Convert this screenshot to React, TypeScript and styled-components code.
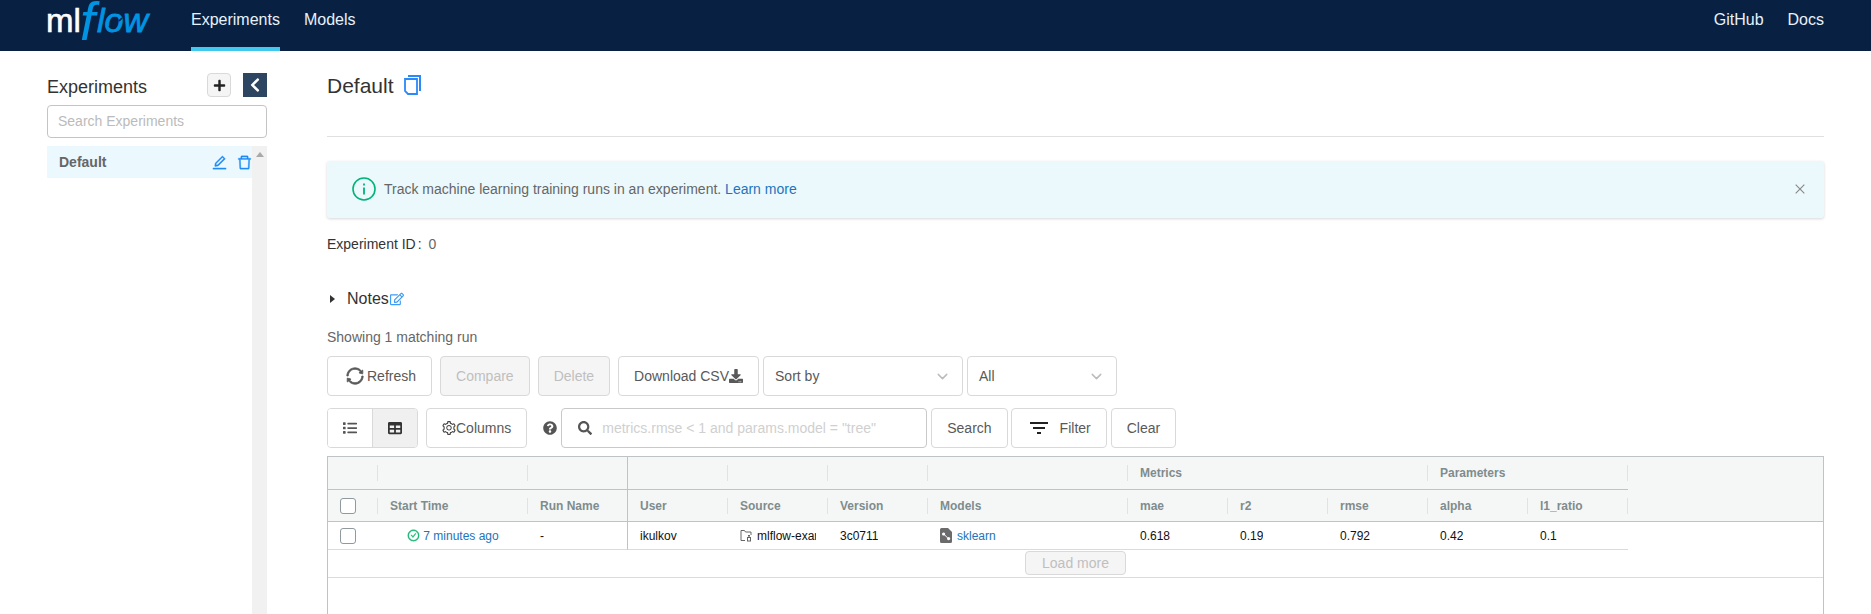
import styled, { createGlobalStyle } from 'styled-components';
import {
  AiOutlineCheckCircle,
  AiOutlineClose,
  AiOutlineDelete,
  AiOutlineEdit,
  AiOutlineSetting,
  AiOutlineSync,
} from 'react-icons/ai';
import {
  FaChevronLeft,
  FaDownload,
  FaList,
  FaPlus,
  FaQuestionCircle,
  FaRegEdit,
  FaSearch,
  FaTable,
} from 'react-icons/fa';
import { FiChevronDown } from 'react-icons/fi';

const GlobalStyle = createGlobalStyle`
  html, body {
    margin: 0;
    height: 100%;
    overflow: hidden;
    background: #fff;
    font-family: 'Liberation Sans', Arial, sans-serif;
    font-size: 14px;
    color: #666;
  }
  * { box-sizing: border-box; }
`;

const Page = styled.div`
  height: 614px;
  display: flex;
  flex-direction: column;
  overflow: hidden;
`;

/* ---------- top bar ---------- */
const TopBar = styled.header`
  height: 51px;
  flex: none;
  display: flex;
  align-items: stretch;
  padding: 0 47px;
  background: #082142;
`;

const LogoMark = styled.svg`
  width: 144px;
  height: 51px;
  flex: none;
  font-family: 'Liberation Sans', Arial, sans-serif;
`;

const NavItem = styled.a<{ $active?: boolean }>`
  display: flex;
  align-items: center;
  height: 51px;
  padding-bottom: 7px;
  font-size: 16px;
  color: #e7f1fb;
  border-bottom: 4px solid ${(p) => (p.$active ? '#43c9ed' : 'transparent')};
  & + & {
    margin-left: 24px;
  }
`;

const NavSpacer = styled.div`
  flex: 1;
`;

/* ---------- sidebar ---------- */
const Body = styled.div`
  flex: 1;
  min-height: 0;
  display: flex;
  padding: 0 47px;
  gap: 60px;
`;

const Sidebar = styled.aside`
  width: 220px;
  flex: none;
  padding-top: 22px;
  display: flex;
  flex-direction: column;
`;

const SidebarHead = styled.div`
  display: flex;
  align-items: center;
  height: 24px;
`;

const SidebarTitle = styled.h1`
  flex: 1;
  margin: 4px 0 0;
  font-size: 18px;
  font-weight: 400;
  color: #333;
`;

const AddButton = styled.button`
  width: 24px;
  height: 24px;
  padding: 0;
  display: flex;
  align-items: center;
  justify-content: center;
  background: #f5f5f5;
  border: 1px solid #d9d9d9;
  border-radius: 4px;
  color: #222;
  font-size: 13px;
`;

const CollapseButton = styled.button`
  width: 24px;
  height: 24px;
  margin-left: 12px;
  padding: 0;
  display: flex;
  align-items: center;
  justify-content: center;
  background: #2e4562;
  border: none;
  color: #fff;
  font-size: 16px;
`;

const SidebarSearch = styled.input`
  width: 220px;
  height: 33px;
  margin-top: 8px;
  padding: 0 10px 2px;
  font: inherit;
  border: 1px solid #c4c4c4;
  border-radius: 4px;
  outline: none;
  &::placeholder {
    color: #bbb;
  }
`;

const ExperimentList = styled.div`
  flex: 1;
  display: flex;
  margin-top: 8px;
`;

const ExperimentItem = styled.div`
  flex: 1;
  height: 32px;
  display: flex;
  align-items: center;
  padding: 0 0 0 12px;
  background: #ebf8fd;
  font-weight: 700;
  color: #666;
`;

const ItemName = styled.span`
  flex: 1;
`;

const ItemIcon = styled.span<{ $gap?: number }>`
  display: flex;
  margin-right: ${(p) => p.$gap ?? 0}px;
  color: #1f8cf5;
  font-size: 17px;

  svg {
    stroke: currentColor;
    stroke-width: 20;
  }
`;

const ScrollTrack = styled.div`
  width: 15px;
  flex: none;
  background: #f1f1f1;
  display: flex;
  justify-content: center;
  padding-top: 6px;
`;

const ScrollArrow = styled.div`
  width: 0;
  height: 0;
  border-left: 4px solid transparent;
  border-right: 4px solid transparent;
  border-bottom: 5px solid #a8a8a8;
`;

/* ---------- main ---------- */
const Main = styled.main`
  flex: 1;
  min-width: 0;
  display: flex;
  flex-direction: column;
`;

const TitleRow = styled.div`
  height: 86px;
  padding-top: 22px;
  display: flex;
  align-items: flex-start;
  gap: 10px;
  border-bottom: 1px solid #e0e0e0;
`;

const Title = styled.h2`
  margin: 0;
  font-size: 21px;
  line-height: 25px;
  font-weight: 400;
  color: #333;
`;

const Alert = styled.div`
  height: 57px;
  margin-top: 24px;
  padding: 0 14px 2px 25px;
  display: flex;
  align-items: center;
  background: #ebf9fd;
  border-radius: 3px;
  box-shadow: 0 1px 3px rgba(0, 0, 0, 0.16);
`;

const AlertText = styled.span`
  flex: 1;
  margin: 1px 0 0 8px;
  color: #666;
`;

const Link = styled.a`
  color: #2374bb;
`;

const CloseIcon = styled(AiOutlineClose)`
  font-size: 14px;
  color: #888;
  margin-right: 3px;
`;

const ExperimentId = styled.div`
  margin-top: 18px;
  height: 16px;
  line-height: 16px;
  color: #333;
`;

const IdColon = styled.span`
  margin-left: 2px;
`;

const IdValue = styled.span`
  margin-left: 7px;
  color: #666;
`;

const Notes = styled.div`
  margin-top: 38px;
  height: 18px;
  display: flex;
  align-items: center;
  font-size: 16px;
  color: #333;
`;

const Caret = styled.span`
  width: 0;
  height: 0;
  margin: 0 12px 0 3px;
  border-top: 4px solid transparent;
  border-bottom: 4px solid transparent;
  border-left: 5px solid #333;
`;

const NotesEdit = styled(FaRegEdit)`
  margin-left: 1px;
  font-size: 14px;
  color: #3f9bf5;
`;

const Showing = styled.div`
  margin-top: 21px;
  height: 16px;
  line-height: 16px;
`;

const ToolRow = styled.div<{ $top: number }>`
  display: flex;
  align-items: center;
  height: 40px;
  margin-top: ${(p) => p.$top}px;
`;

const Button = styled.button<{ $disabled?: boolean; $after?: number; $gap?: number; $left?: number }>`
  height: 40px;
  padding: 0 15px 0 ${(p) => p.$left ?? 15}px;
  display: flex;
  align-items: center;
  gap: ${(p) => p.$gap ?? 0}px;
  flex: none;
  font: inherit;
  white-space: nowrap;
  color: ${(p) => (p.$disabled ? '#bfbfbf' : '#595959')};
  background: ${(p) => (p.$disabled ? '#f5f5f5' : '#fff')};
  border: 1px solid #d9d9d9;
  border-radius: 4px;
  margin-right: ${(p) => p.$after ?? 8}px;
`;

const RefreshIcon = styled(AiOutlineSync)`
  font-size: 20px;
  stroke: currentColor;
  stroke-width: 40;
`;

const GearIcon = styled(AiOutlineSetting)`
  font-size: 16px;
  margin: 0 -1px;
  color: #444;
`;

const SelectBox = styled.div<{ $w: number }>`
  width: ${(p) => p.$w}px;
  height: 40px;
  margin-right: 4px;
  padding: 0 11px;
  display: flex;
  align-items: center;
  justify-content: space-between;
  background: #fff;
  border: 1px solid #d9d9d9;
  border-radius: 4px;
  color: #595959;
`;

const SelectArrow = styled(FiChevronDown)`
  font-size: 17px;
  color: #bbb;
`;

const Toggle = styled.div`
  width: 91px;
  height: 40px;
  flex: none;
  margin-right: 8px;
  display: flex;
  border: 1px solid #d9d9d9;
  border-radius: 4px;
  overflow: hidden;
`;

const ToggleItem = styled.div<{ $on?: boolean }>`
  flex: 1;
  display: flex;
  align-items: center;
  justify-content: center;
  font-size: 14px;
  color: ${(p) => (p.$on ? '#333' : '#555')};
  background: ${(p) => (p.$on ? '#f0f0f0' : '#fff')};
  & + & {
    border-left: 1px solid #d9d9d9;
  }
`;

const HelpIcon = styled(FaQuestionCircle)`
  margin: 0 4px 0 8px;
  font-size: 14px;
  flex: none;
  color: #555;
`;

const QueryBox = styled.div`
  width: 366px;
  height: 40px;
  flex: none;
  margin-right: 4px;
  padding-left: 16px;
  display: flex;
  align-items: center;
  border: 1px solid #c9c9c9;
  border-radius: 4px;
  color: #555;
  font-size: 14px;
`;

const QueryInput = styled.input`
  flex: 1;
  min-width: 0;
  margin-left: 8px;
  border: none;
  outline: none;
  font: inherit;
  &::placeholder {
    color: #d0d0d0;
  }
`;

/* ---------- runs grid ---------- */
const Grid = styled.section`
  flex: 1;
  margin-top: 8px;
  min-height: 0;
  display: flex;
  flex-direction: column;
  border: 1px solid #bdc3c7;
  border-bottom: none;
  font-size: 12px;
`;

const HeadRow = styled.div<{ $line?: boolean; $h: number }>`
  display: flex;
  flex: none;
  height: ${(p) => p.$h}px;
  background: #f5f7f7;
  border-bottom: ${(p) => (p.$line ? '1px solid #bdc3c7' : 'none')};
`;

const DataRow = styled.div`
  display: flex;
  flex: none;
  height: 28px;
`;

const Cell = styled.div<{ $w: number; $pin?: boolean; $sep?: boolean; $line?: string; $center?: boolean }>`
  position: relative;
  flex: none;
  width: ${(p) => p.$w}px;
  padding: 0 12px;
  display: flex;
  align-items: center;
  justify-content: ${(p) => (p.$center ? 'center' : 'flex-start')};
  white-space: nowrap;
  overflow: hidden;
  border-right: ${(p) => (p.$pin ? '1px solid #bdc3c7' : 'none')};
  border-bottom: ${(p) => (p.$line ? `1px solid ${p.$line}` : 'none')};

  &::after {
    content: '';
    display: ${(p) => (p.$sep ? 'block' : 'none')};
    position: absolute;
    top: 8px;
    right: 0;
    width: 1px;
    height: 16px;
    background: #dfe3e5;
  }
`;

const HeadLabel = styled.span`
  font-weight: 700;
  color: #7f8c8d;
`;

const CellText = styled.span`
  min-width: 0;
  overflow: hidden;
  color: #111;
`;

const Check = styled.span`
  width: 16px;
  height: 16px;
  flex: none;
  background: #fff;
  border: 1.5px solid #8f9a9e;
  border-radius: 3px;
`;

const StatusIcon = styled(AiOutlineCheckCircle)`
  flex: none;
  margin-right: 3px;
  font-size: 13px;
  color: #10b36f;
  stroke: currentColor;
  stroke-width: 30;
`;

const SmallIcon = styled.svg`
  flex: none;
  margin-right: 5px;
`;

const LoadRow = styled.div`
  flex: none;
  height: 28px;
  display: flex;
  align-items: center;
  justify-content: center;
  padding-bottom: 1px;
  border-bottom: 1px solid #d9dcde;
`;

const LoadMore = styled.button`
  width: 101px;
  height: 24px;
  padding: 0;
  font: inherit;
  font-size: 14px;
  color: #bfbfbf;
  background: #f5f5f5;
  border: 1px solid #d9d9d9;
  border-radius: 4px;
`;

const Logo = () => (
  <LogoMark viewBox="0 0 144 51">
    <text x="-1" y="32" fontSize="33" fill="#fff" stroke="#fff" strokeWidth="0.6">
      ml
    </text>
    <text x="33" y="40" fontSize="54" fontStyle="italic" fill="#0194e2">
      f
    </text>
    <text x="50" y="32" fontSize="34" fontStyle="italic" fill="#0194e2" stroke="#0194e2" strokeWidth="0.8">
      low
    </text>
    {/* the two gaps that make the o look like a refresh arrow */}
    <path d="M62 27l4-3M72 21l3-3" stroke="#082142" strokeWidth="1.6" fill="none" />
  </LogoMark>
);

const CopyIcon = () => (
  <svg width="17" height="20" viewBox="0 0 17 20" fill="none" stroke="#2b8af7" strokeWidth="2" style={{ marginTop: 2 }}>
    <path d="M4 1h12v15" />
    <path d="M1 4h12v15H4l-3-3z" strokeWidth="1.8" />
  </svg>
);

const FilterIcon = () => (
  <svg width="18" height="12" viewBox="0 0 18 12" fill="#222">
    <rect x="0" y="0" width="18" height="2" />
    <rect x="3" y="5" width="12" height="2" />
    <rect x="7" y="10" width="4" height="2" />
  </svg>
);

const FolderIcon = () => (
  <SmallIcon width="12" height="13" viewBox="0 0 12 13" fill="none" stroke="#666" strokeWidth="1">
    <path d="M5 11.5H1V1.5h3.5l1 1.5H11v3" />
    <rect x="8" y="6" width="2" height="1.6" fill="#666" stroke="none" />
    <rect x="7.5" y="8.5" width="3" height="3.5" fill="none" />
  </SmallIcon>
);

const ModelIcon = () => (
  <SmallIcon width="12" height="15" viewBox="0 0 12 15">
    <path d="M1.5 0H8l4 4v9.5a1.5 1.5 0 0 1-1.5 1.5h-9A1.5 1.5 0 0 1 0 13.5v-12A1.5 1.5 0 0 1 1.5 0z" fill="#6b6b6b" />
    <circle cx="3.6" cy="6" r="1.6" fill="#fff" />
    <circle cx="8.6" cy="10.6" r="1.6" fill="#fff" />
    <path d="M4.5 6.8l3 3" stroke="#fff" strokeWidth="1" />
  </SmallIcon>
);

const topGroups = [
  { w: 50, sep: true },
  { w: 150, sep: true },
  { w: 100, pin: true },
  { w: 100, sep: true },
  { w: 100, sep: true },
  { w: 100, sep: true },
  { w: 200, sep: true },
  { w: 300, sep: true, label: 'Metrics' },
  { w: 200, sep: true, label: 'Parameters' },
];

const columns = [
  { w: 150, sep: true, label: 'Start Time' },
  { w: 100, pin: true, label: 'Run Name' },
  { w: 100, sep: true, label: 'User' },
  { w: 100, sep: true, label: 'Source' },
  { w: 100, sep: true, label: 'Version' },
  { w: 200, sep: true, label: 'Models' },
  { w: 100, sep: true, label: 'mae' },
  { w: 100, sep: true, label: 'r2' },
  { w: 100, sep: true, label: 'rmse' },
  { w: 100, sep: true, label: 'alpha' },
  { w: 100, sep: true, label: 'l1_ratio' },
];

const rowLine = '#d9dcde';

const App = () => {
  return (
    <Page>
      <GlobalStyle />
      <TopBar>
        <Logo />
        <NavItem $active>Experiments</NavItem>
        <NavItem>Models</NavItem>
        <NavSpacer />
        <NavItem>GitHub</NavItem>
        <NavItem>Docs</NavItem>
      </TopBar>

      <Body>
        <Sidebar>
          <SidebarHead>
            <SidebarTitle>Experiments</SidebarTitle>
            <AddButton>
              <FaPlus />
            </AddButton>
            <CollapseButton>
              <FaChevronLeft />
            </CollapseButton>
          </SidebarHead>
          <SidebarSearch placeholder="Search Experiments" />
          <ExperimentList>
            <ExperimentItem>
              <ItemName>Default</ItemName>
              <ItemIcon $gap={8}>
                <AiOutlineEdit />
              </ItemIcon>
              <ItemIcon $gap={-1}>
                <AiOutlineDelete />
              </ItemIcon>
            </ExperimentItem>
            <ScrollTrack>
              <ScrollArrow />
            </ScrollTrack>
          </ExperimentList>
        </Sidebar>

        <Main>
          <TitleRow>
            <Title>Default</Title>
            <CopyIcon />
          </TitleRow>

          <Alert>
            <svg width="24" height="24" viewBox="0 0 24 24" fill="none" stroke="#00b379" strokeWidth="1.6">
              <circle cx="12" cy="12" r="11" />
              <path d="M12 10.5v7M12 6.5v2" strokeWidth="1.8" />
            </svg>
            <AlertText>
              Track machine learning training runs in an experiment. <Link>Learn more</Link>
            </AlertText>
            <CloseIcon />
          </Alert>

          <ExperimentId>
            Experiment ID<IdColon>:</IdColon>
            <IdValue>0</IdValue>
          </ExperimentId>

          <Notes>
            <Caret />
            Notes
            <NotesEdit />
          </Notes>

          <Showing>Showing 1 matching run</Showing>

          <ToolRow $top={11}>
            <Button $gap={2} $left={17}>
              <RefreshIcon />
              Refresh
            </Button>
            <Button $disabled>Compare</Button>
            <Button $disabled>Delete</Button>
            <Button $after={4}>
              Download CSV
              <FaDownload size={14} />
            </Button>
            <SelectBox $w={200}>
              Sort by
              <SelectArrow />
            </SelectBox>
            <SelectBox $w={150}>
              All
              <SelectArrow />
            </SelectBox>
          </ToolRow>

          <ToolRow $top={12}>
            <Toggle>
              <ToggleItem>
                <FaList />
              </ToggleItem>
              <ToggleItem $on>
                <FaTable />
              </ToggleItem>
            </Toggle>
            <Button>
              <GearIcon />
              Columns
            </Button>
            <HelpIcon />
            <QueryBox>
              <FaSearch />
              <QueryInput placeholder={'metrics.rmse < 1 and params.model = "tree"'} />
            </QueryBox>
            <Button $after={3}>Search</Button>
            <Button $after={4} $gap={12} $left={18}>
              <FilterIcon />
              Filter
            </Button>
            <Button>Clear</Button>
          </ToolRow>

          <Grid>
            <HeadRow $h={33}>
              {topGroups.map((g, i) => (
                <Cell key={i} $w={g.w} $sep={g.sep} $pin={g.pin} $line="#bdc3c7">
                  {g.label && <HeadLabel>{g.label}</HeadLabel>}
                </Cell>
              ))}
            </HeadRow>
            <HeadRow $h={32} $line>
              <Cell $w={50} $sep>
                <Check />
              </Cell>
              {columns.map((c) => (
                <Cell key={c.label} $w={c.w} $sep={c.sep} $pin={c.pin}>
                  <HeadLabel>{c.label}</HeadLabel>
                </Cell>
              ))}
            </HeadRow>
            <DataRow>
              <Cell $w={50} $line={rowLine}>
                <Check />
              </Cell>
              <Cell $w={150} $center $line={rowLine}>
                <StatusIcon />
                <Link>7 minutes ago</Link>
              </Cell>
              <Cell $w={100} $pin $line={rowLine}>
                <CellText>-</CellText>
              </Cell>
              <Cell $w={100} $line={rowLine}>
                <CellText>ikulkov</CellText>
              </Cell>
              <Cell $w={100} $line={rowLine}>
                <FolderIcon />
                <CellText>mlflow-example</CellText>
              </Cell>
              <Cell $w={100} $line={rowLine}>
                <CellText>3c0711</CellText>
              </Cell>
              <Cell $w={200} $line={rowLine}>
                <ModelIcon />
                <Link>sklearn</Link>
              </Cell>
              {['0.618', '0.19', '0.792', '0.42', '0.1'].map((v) => (
                <Cell key={v} $w={100} $line={rowLine}>
                  <CellText>{v}</CellText>
                </Cell>
              ))}
            </DataRow>
            <LoadRow>
              <LoadMore>Load more</LoadMore>
            </LoadRow>
          </Grid>
        </Main>
      </Body>
    </Page>
  );
};

export default App;
